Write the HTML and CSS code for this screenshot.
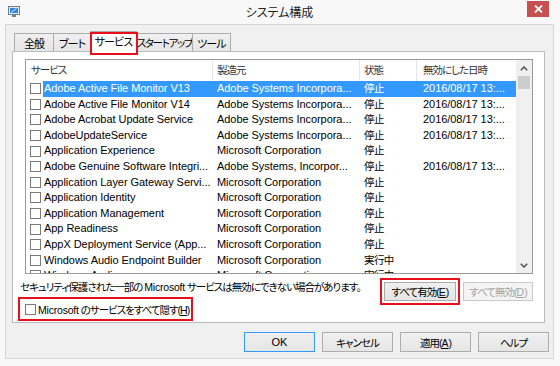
FILE: index.html
```html
<!DOCTYPE html>
<html lang="ja">
<head>
  <meta charset="UTF-8" />
  <title>システム構成</title>
  <link rel="stylesheet" href="styles.css">
</head>
<body>

  <div class="window">
    <div class="titlebar">
      <svg class="app-icon" width="12" height="11" viewBox="0 0 12 11">
        <rect x="0.5" y="0.5" width="11" height="8" fill="#e3e9ef" stroke="#6d7f93" />
        <rect x="2" y="2" width="8" height="5" fill="#2f86e0" />
        <path d="M3 6.5 L8.5 2.5" stroke="#d6ebff" stroke-width="1" />
        <rect x="4" y="9" width="4" height="2" fill="#6d7f93" />
      </svg>
      <span class="title">システム構成</span>
      <button class="close">
        <svg width="9" height="8" viewBox="0 0 9 8">
          <path d="M1 0.5 L8 7.5 M8 0.5 L1 7.5" stroke="#fff" stroke-width="1.8" />
        </svg>
      </button>
    </div>

    <div class="client">
      <div class="tabs">
        <div class="tab tab-general">全般</div>
        <div class="tab tab-boot">ブート</div>
        <div class="tab tab-services active">サービス</div>
        <div class="tab tab-startup">スタートアップ</div>
        <div class="tab tab-tools">ツール</div>
      </div>

      <div class="panel">
        <div class="list">
          <div class="list-main">
            <div class="list-head">
              <div>サービス</div>
              <div>製造元</div>
              <div>状態</div>
              <div>無効にした日時</div>
            </div>

            <div class="row sel">
              <span class="check"></span>
              <div class="cells">
                <span>Adobe Active File Monitor V13</span>
                <span>Adobe Systems Incorpora...</span>
                <span class="status">停止</span>
                <span>2016/08/17 13:...</span>
              </div>
            </div>
            <div class="row">
              <span class="check"></span>
              <div class="cells">
                <span>Adobe Active File Monitor V14</span>
                <span>Adobe Systems Incorpora...</span>
                <span class="status">停止</span>
                <span>2016/08/17 13:...</span>
              </div>
            </div>
            <div class="row">
              <span class="check"></span>
              <div class="cells">
                <span>Adobe Acrobat Update Service</span>
                <span>Adobe Systems Incorpora...</span>
                <span class="status">停止</span>
                <span>2016/08/17 13:...</span>
              </div>
            </div>
            <div class="row">
              <span class="check"></span>
              <div class="cells">
                <span>AdobeUpdateService</span>
                <span>Adobe Systems Incorpora...</span>
                <span class="status">停止</span>
                <span>2016/08/17 13:...</span>
              </div>
            </div>
            <div class="row">
              <span class="check"></span>
              <div class="cells">
                <span>Application Experience</span>
                <span>Microsoft Corporation</span>
                <span class="status">停止</span>
                <span></span>
              </div>
            </div>
            <div class="row">
              <span class="check"></span>
              <div class="cells">
                <span>Adobe Genuine Software Integri...</span>
                <span>Adobe Systems, Incorpor...</span>
                <span class="status">停止</span>
                <span>2016/08/17 13:...</span>
              </div>
            </div>
            <div class="row">
              <span class="check"></span>
              <div class="cells">
                <span>Application Layer Gateway Servi...</span>
                <span>Microsoft Corporation</span>
                <span class="status">停止</span>
                <span></span>
              </div>
            </div>
            <div class="row">
              <span class="check"></span>
              <div class="cells">
                <span>Application Identity</span>
                <span>Microsoft Corporation</span>
                <span class="status">停止</span>
                <span></span>
              </div>
            </div>
            <div class="row">
              <span class="check"></span>
              <div class="cells">
                <span>Application Management</span>
                <span>Microsoft Corporation</span>
                <span class="status">停止</span>
                <span></span>
              </div>
            </div>
            <div class="row">
              <span class="check"></span>
              <div class="cells">
                <span>App Readiness</span>
                <span>Microsoft Corporation</span>
                <span class="status">停止</span>
                <span></span>
              </div>
            </div>
            <div class="row">
              <span class="check"></span>
              <div class="cells">
                <span>AppX Deployment Service (App...</span>
                <span>Microsoft Corporation</span>
                <span class="status">停止</span>
                <span></span>
              </div>
            </div>
            <div class="row">
              <span class="check"></span>
              <div class="cells">
                <span>Windows Audio Endpoint Builder</span>
                <span>Microsoft Corporation</span>
                <span class="status">実行中</span>
                <span></span>
              </div>
            </div>
            <div class="row">
              <span class="check"></span>
              <div class="cells">
                <span>Windows Audio</span>
                <span>Microsoft Corporation</span>
                <span class="status">実行中</span>
                <span></span>
              </div>
            </div>
          </div>

          <div class="scrollbar">
            <div class="arrow">
              <svg width="8" height="5" viewBox="0 0 8 5"><path d="M0.8 4.2 L4 1 L7.2 4.2" fill="none" stroke="#505050" stroke-width="1.5" /></svg>
            </div>
            <div class="thumb"></div>
            <div class="track"></div>
            <div class="arrow">
              <svg width="8" height="5" viewBox="0 0 8 5"><path d="M0.8 0.8 L4 4 L7.2 0.8" fill="none" stroke="#505050" stroke-width="1.5" /></svg>
            </div>
          </div>
        </div>

        <div class="below">
          <div class="notes">
            <p class="note">セキュリティ保護された一部の <span class="latin">Microsoft</span> サービスは無効にできない場合があります。</p>
            <label class="hide-ms"><span class="check"></span><span><span class="latin">Microsoft</span> のサービスをすべて隠す(<u>H</u>)</span></label>
          </div>
          <div class="actions">
            <button class="btn enable-all">すべて有効(<u>E</u>)</button>
            <button class="btn disable-all" disabled>すべて無効(<u>D</u>)</button>
          </div>
        </div>
      </div>

      <div class="footer">
        <button class="btn default">OK</button>
        <button class="btn">キャンセル</button>
        <button class="btn">適用(<u>A</u>)</button>
        <button class="btn">ヘルプ</button>
      </div>
    </div>
  </div>

</body>
</html>
```

FILE: styles.css
```css
* {
  box-sizing: border-box;
}

body {
  margin: 0;
  background: #fff;
  color: #000;
  font-family: "Liberation Sans", "Noto Sans CJK JP", sans-serif;
  font-size: 10.5px;
  letter-spacing: -1px;
  font-feature-settings: "palt";
}

.latin {
  letter-spacing: -0.2px;
}

.window {
  width: 560px;
  height: 366px;
  background: #f8f8f8;
  padding: 0 6px 7px 5px;
  display: flex;
  flex-direction: column;
}

/* title bar */
.titlebar {
  height: 24px;
  flex: none;
  display: grid;
  grid-template-columns: 1fr auto 1fr;
  align-items: start;
}

.app-icon {
  margin: 6px 0 0 3px;
}

.title {
  padding-top: 5px;
  font-size: 12px;
  line-height: 17px;
  letter-spacing: 0;
  color: #222;
}

.close {
  justify-self: end;
  width: 22px;
  height: 16px;
  margin: 1px 5px 0 0;
  padding: 0;
  border: none;
  background: #c75050;
  display: flex;
  align-items: center;
  justify-content: center;
}

/* client area */
.client {
  flex: 1;
  background: #f0f0f0;
  border: 1px solid #d6d6d6;
  display: flex;
  flex-direction: column;
}

.tabs {
  height: 18px;
  margin-top: 8px;
  padding-left: 8px;
  display: flex;
  align-items: flex-end;
}

.tab {
  height: 18px;
  margin-right: -1px;
  border: 1px solid #acacac;
  border-bottom: none;
  background: linear-gradient(#f0f0f0, #e5e5e5);
  display: flex;
  align-items: center;
  justify-content: center;
  white-space: nowrap;
  font-size: 11px;
  letter-spacing: -0.9px;
}

.tab-general { width: 40px; }
.tab-boot { width: 38px; }
.tab-services { width: 47px; }
.tab-startup { width: 57px; font-size: 10.5px; letter-spacing: -1.3px; }
.tab-tools { width: 39px; }

.tab.active {
  position: relative;
  z-index: 1;
  height: 21px;
  margin-bottom: -1px;
  padding-bottom: 2px;
  background: #fff;
}

.tab.active::after {
  content: "";
  position: absolute;
  left: -1px;
  right: -2px;
  top: 0;
  bottom: -3px;
  border: 2px solid #e8101a;
}

.panel {
  height: 272px;
  margin: 0 8px 0 6px;
  padding: 7px 10px 0 7px;
  background: #fff;
  border: 1px solid #bcbcbc;
}

/* service list */
.list {
  width: 508px;
  height: 215px;
  margin-left: 5px;
  border: 1px solid #9a9a9a;
  background: #fff;
  display: flex;
}

.list-main {
  width: 490px;
  overflow: hidden;
}

.list-head {
  height: 21px;
  display: grid;
  grid-template-columns: 187px 147px 57px 99px;
}

.list-head div {
  padding-left: 4px;
  border-right: 1px solid #e5e5e5;
  line-height: 20px;
  color: #333;
}

.list-head div:first-child {
  padding-left: 5px;
}

.list-head div:last-child {
  padding-left: 6px;
  border-right: none;
}

.row {
  height: 15.6px;
  display: flex;
  align-items: center;
}

.row .check {
  margin: 0 2px 0 4px;
}

.cells {
  flex: 1;
  height: 100%;
  display: grid;
  grid-template-columns: 170px 147px 57px 99px;
  font-size: 11px;
  letter-spacing: -0.05px;
  line-height: 15.6px;
}

.cells span {
  padding-left: 4px;
  white-space: nowrap;
  overflow: hidden;
}

.cells span:first-child {
  padding-left: 1px;
}

.cells span:last-child {
  padding-left: 6px;
}

.cells .status {
  font-size: 10.5px;
  letter-spacing: -0.6px;
}

.row.sel .cells {
  background: #3399ff;
  color: #fff;
}

.check {
  flex: none;
  width: 11px;
  height: 11px;
  border: 1px solid #7a7a7a;
  background: #fff;
}

.scrollbar {
  width: 16px;
  background: #f0f0f0;
  display: flex;
  flex-direction: column;
}

.arrow {
  height: 16px;
  display: flex;
  align-items: center;
  justify-content: center;
}

.thumb {
  height: 13px;
  margin: 0 2px;
  background: #cdcdcd;
}

.track {
  flex: 1;
}

/* below the list */
.below {
  display: flex;
  justify-content: space-between;
}

.notes {
  padding-top: 6px;
}

.note {
  margin: 0;
  line-height: 14px;
  white-space: nowrap;
}

.hide-ms {
  width: 175px;
  height: 24px;
  margin: 3px 0 0 -2px;
  padding-left: 5px;
  border: 2px solid #e8101a;
  display: flex;
  align-items: center;
  white-space: nowrap;
}

.hide-ms .check {
  margin-right: 2px;
}

.actions {
  display: flex;
  gap: 7px;
  margin: 8px 1px 0 0;
}

.btn {
  height: 20px;
  padding: 0;
  border: 1px solid #acacac;
  background: linear-gradient(#f0f0f0, #e5e5e5);
  color: #000;
  font: inherit;
  letter-spacing: -1px;
  font-feature-settings: "palt";
  white-space: nowrap;
}

.btn u {
  letter-spacing: 0;
}

.enable-all {
  width: 72px;
  height: 19px;
  outline: 2px solid #e8101a;
  outline-offset: 2px;
}

.disable-all {
  width: 70px;
  height: 19px;
  border-color: #c9c9c9;
  background: #f4f4f4;
  color: #a3a3a3;
}

.footer {
  margin-top: 9px;
  padding-right: 4px;
  display: flex;
  justify-content: flex-end;
  gap: 7px;
}

.footer .btn {
  width: 71px;
}

.btn.default {
  border-color: #3399ff;
  font-size: 11px;
  letter-spacing: 0;
}
```
